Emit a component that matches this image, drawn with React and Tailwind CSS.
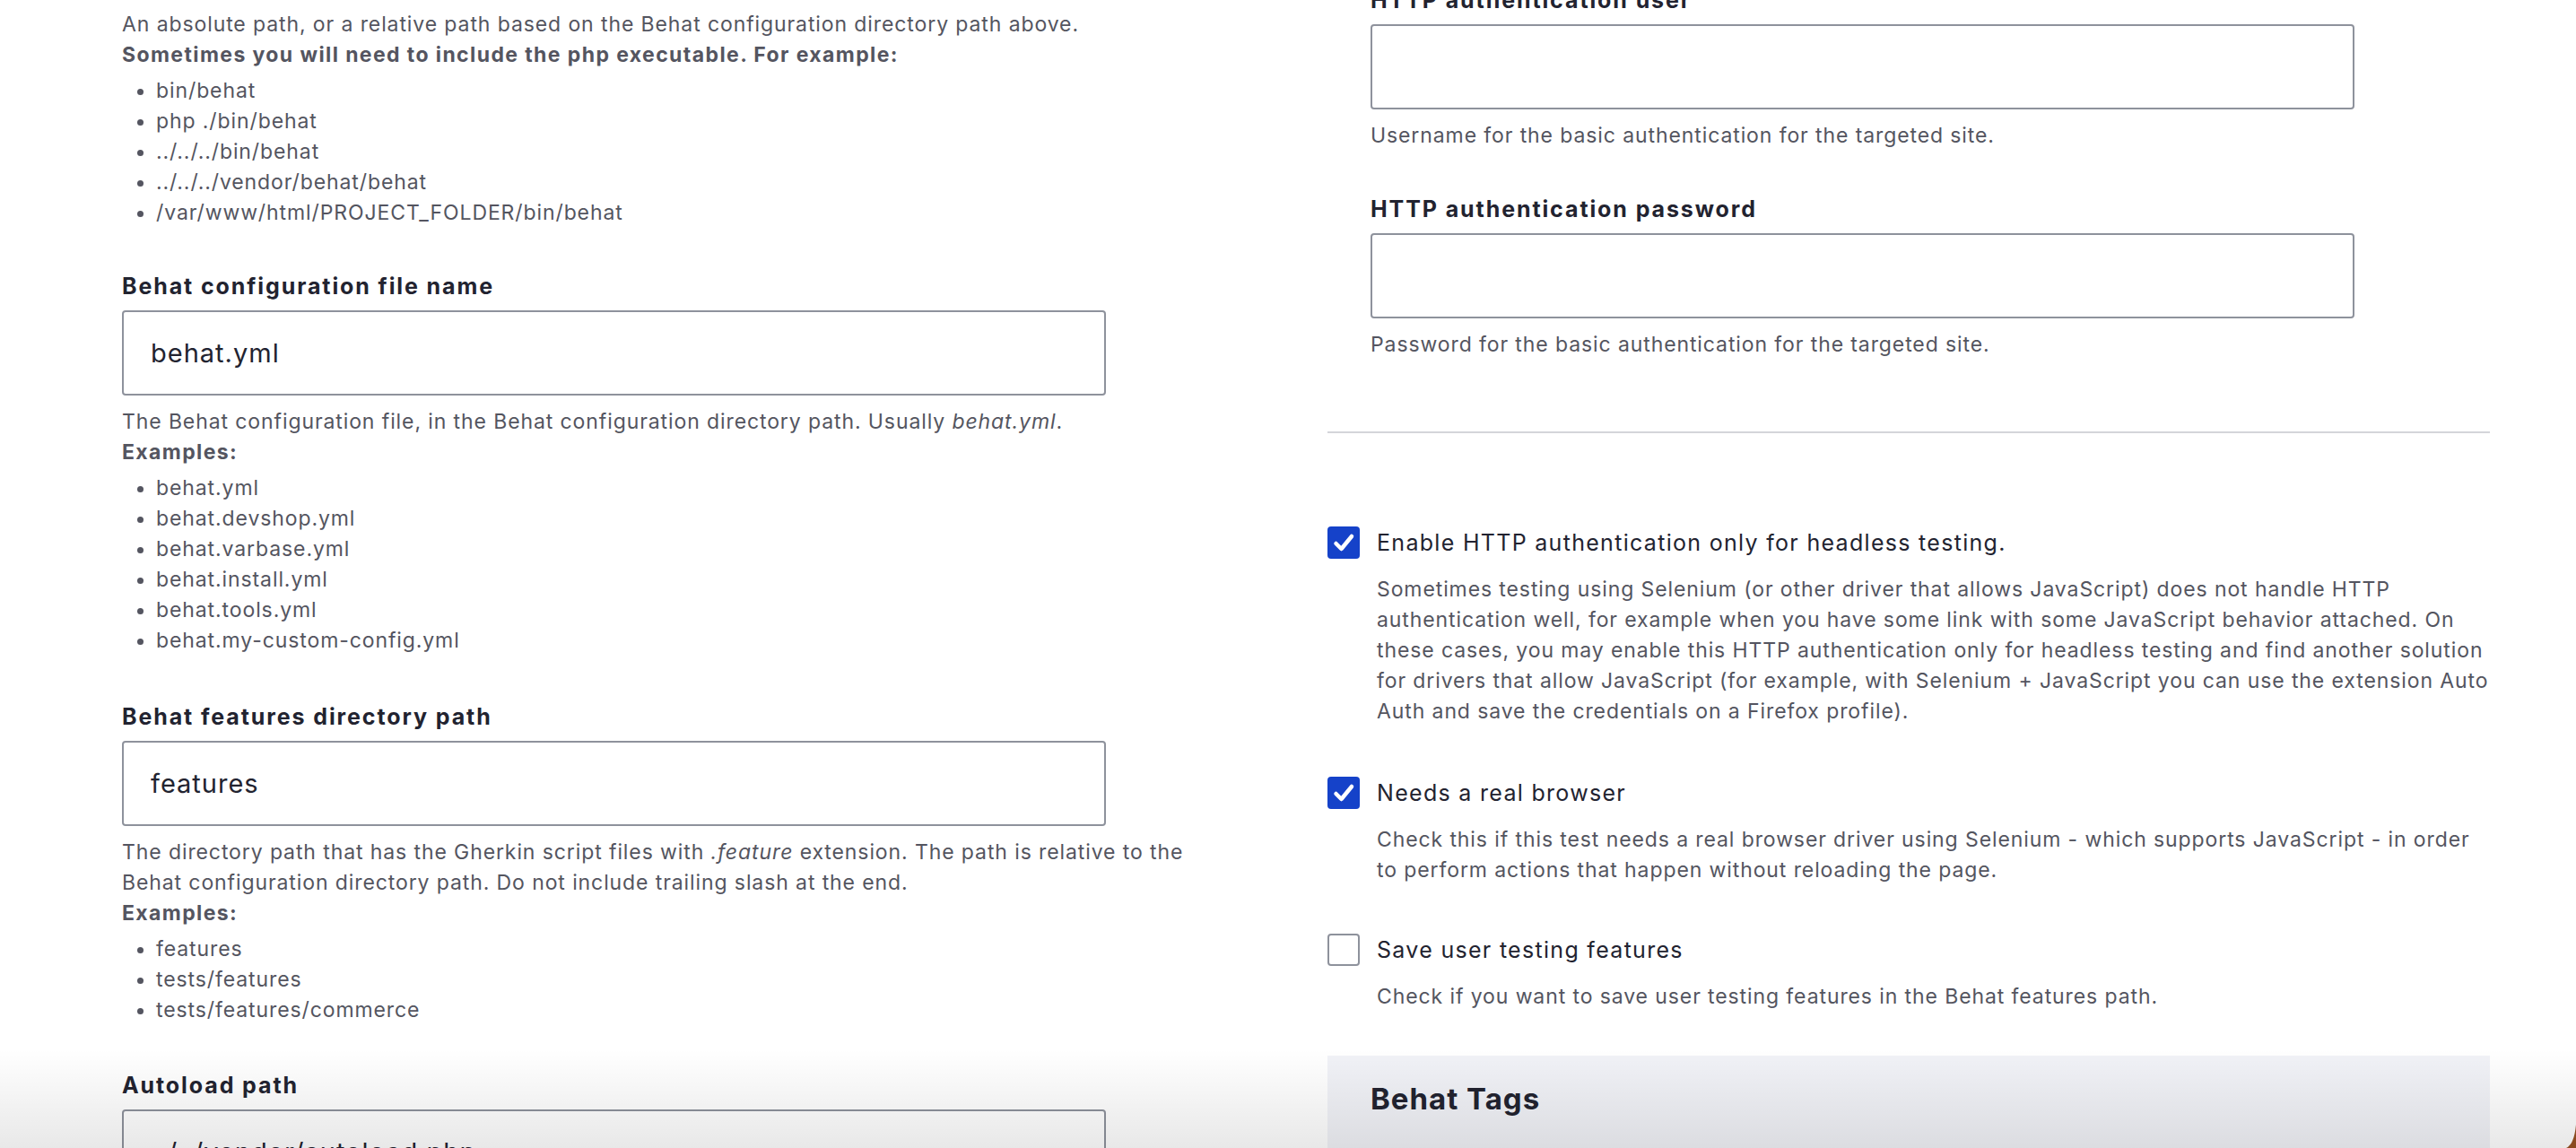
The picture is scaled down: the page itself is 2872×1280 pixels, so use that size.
import React from "react";

const descCls = "text-[23px] leading-[34px] tracking-[0.9px] text-[#545560]";
const strongCls = "font-bold tracking-[1.4px]";

function TextField({ label, value = "", children }) {
  return (
    <div>
      <label className="block text-[25px] leading-[34px] font-bold tracking-[1.9px] text-[#222330]">{label}</label>
      <input
        readOnly
        value={value}
        className="mt-[10px] block w-[1097px] h-[95px] border-2 border-[#8e929c] rounded-[4px] bg-white px-[30px] text-[29px] tracking-[1px] text-[#222330] outline-none"
      />
      {children && <div className={`mt-3 ${descCls}`}>{children}</div>}
    </div>
  );
}

function Examples({ items }) {
  return (
    <ul className="mt-[6px] list-disc pl-[38px] marker:text-[#545560]">
      {items.map((item) => (
        <li key={item}>{item}</li>
      ))}
    </ul>
  );
}

function Checkbox({ checked, label, children }) {
  return (
    <div>
      <div className="flex items-center gap-[19px]">
        <span
          className={
            checked
              ? "flex h-9 w-9 shrink-0 items-center justify-center rounded-[4px] bg-[#1542c9]"
              : "h-9 w-9 shrink-0 rounded-[4px] border-2 border-[#8e929c] bg-white"
          }
        >
          {checked && (
            <svg viewBox="0 0 36 36" className="h-9 w-9">
              <path d="M9.5 19 L15.5 25 L27 11" fill="none" stroke="white" strokeWidth="4.5" strokeLinecap="round" strokeLinejoin="round" />
            </svg>
          )}
        </span>
        <span className="text-[25px] leading-[36px] tracking-[1.3px] text-[#222330]">{label}</span>
      </div>
      <div className={`mt-[17px] pl-[55px] ${descCls}`}>{children}</div>
    </div>
  );
}

export default function App() {
  return (
    <div className="relative h-[1280px] overflow-hidden bg-white font-['Inter','Noto_Sans',sans-serif]">
      <div className="grid grid-cols-[1296px_1296px] gap-x-[96px] pl-[88px]">
        {/* Left column */}
        <div className="pl-12 pr-[30px] pt-[10px]">
          <div className={descCls}>
            <div>An absolute path, or a relative path based on the Behat configuration directory path above.</div>
            <div className={strongCls}>Sometimes you will need to include the php executable. For example:</div>
            <Examples
              items={[
                "bin/behat",
                "php ./bin/behat",
                "../../../bin/behat",
                "../../../vendor/behat/behat",
                "/var/www/html/PROJECT_FOLDER/bin/behat",
              ]}
            />
          </div>

          <div className="mt-12">
            <TextField label="Behat configuration file name" value="behat.yml">
              <div>
                The Behat configuration file, in the Behat configuration directory path. Usually <em>behat.yml</em>.
              </div>
              <div className={strongCls}>Examples:</div>
              <Examples
                items={[
                  "behat.yml",
                  "behat.devshop.yml",
                  "behat.varbase.yml",
                  "behat.install.yml",
                  "behat.tools.yml",
                  "behat.my-custom-config.yml",
                ]}
              />
            </TextField>
          </div>

          <div className="mt-[51px]">
            <TextField label="Behat features directory path" value="features">
              <div>
                The directory path that has the Gherkin script files with <em>.feature</em> extension. The path is
                relative to the Behat configuration directory path. Do not include trailing slash at the end.
              </div>
              <div className={strongCls}>Examples:</div>
              <Examples items={["features", "tests/features", "tests/features/commerce"]} />
            </TextField>
          </div>

          <div className="mt-[50px]">
            <TextField label="Autoload path" value="../../vendor/autoload.php" />
          </div>
        </div>

        {/* Right column */}
        <div>
          <div className="-mt-[17px] pl-12">
            <TextField label="HTTP authentication user">
              Username for the basic authentication for the targeted site.
            </TextField>
            <div className="mt-12">
              <TextField label="HTTP authentication password">
                Password for the basic authentication for the targeted site.
              </TextField>
            </div>
          </div>

          <div className="mt-[80px] h-[2px] bg-[#d4d5da]" />

          <div className="mt-[104px]">
            <Checkbox checked label="Enable HTTP authentication only for headless testing.">
              Sometimes testing using Selenium (or other driver that allows JavaScript) does not handle HTTP
              authentication well, for example when you have some link with some JavaScript behavior attached. On
              these cases, you may enable this HTTP authentication only for headless testing and find another
              solution for drivers that allow JavaScript (for example, with Selenium + JavaScript you can use the
              extension Auto Auth and save the credentials on a Firefox profile).
            </Checkbox>
          </div>
          <div className="mt-[56px]">
            <Checkbox checked label="Needs a real browser">
              Check this if this test needs a real browser driver using Selenium - which supports JavaScript - in
              order to perform actions that happen without reloading the page.
            </Checkbox>
          </div>
          <div className="mt-[54px]">
            <Checkbox label="Save user testing features">
              Check if you want to save user testing features in the Behat features path.
            </Checkbox>
          </div>

          <div className="mt-[49px] h-[200px] bg-[#f1f2f7] px-12 pt-[28px]">
            <h2 className="text-[33px] leading-[40px] font-bold tracking-[1px] text-[#222330]">Behat Tags</h2>
          </div>
        </div>
      </div>

      {/* window edge shadow */}
      <div className="pointer-events-none absolute inset-x-0 bottom-0 h-[110px] bg-linear-to-b from-transparent to-black/[0.09]" />
      <svg className="absolute bottom-0 right-0" width="12" height="26" viewBox="0 0 12 26">
        <path d="M12 0 L12 26 L1 26 Q 10 22 12 0 Z" fill="#8a4a1f" />
      </svg>
    </div>
  );
}
